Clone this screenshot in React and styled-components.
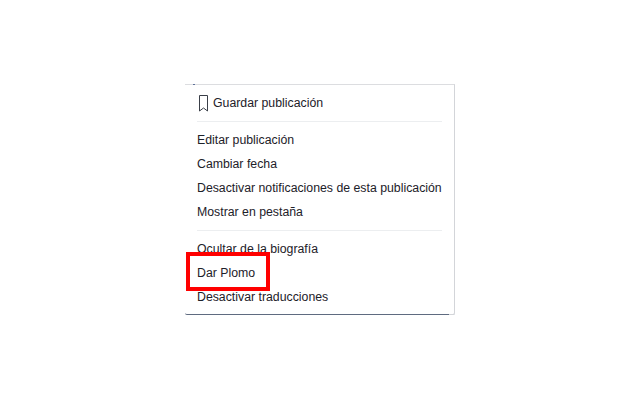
import React from 'react';
import styled, { createGlobalStyle } from 'styled-components';

const GlobalStyle = createGlobalStyle`
    html, body {
        margin: 0;
        padding: 0;
        background: #fff;
    }
    body {
        font-family: "Liberation Sans", Arial, sans-serif;
    }
`;

const Page = styled.div`
    width: 640px;
    height: 400px;
    padding: 84px 0 0 185px;
    box-sizing: border-box;
`;

const Menu = styled.div`
    position: relative;
    width: 270px;
    height: 231px;
    box-sizing: border-box;
    background: #fff;
    border-top: 1px solid #dcdde0;
    border-right: 1px solid #d3d5d9;
    border-bottom: 1px solid #5f6b80;
    border-radius: 0 0 2px 2px;
    padding: 6px 12px 0;

    /* little tick on the top edge */
    &::before {
        content: '';
        position: absolute;
        left: 8px;
        top: -1px;
        width: 2px;
        height: 1px;
        background: #5f7199;
    }

    /* bottom line fades out at the right corner */
    &::after {
        content: '';
        position: absolute;
        right: 0;
        bottom: -1px;
        width: 5px;
        height: 1px;
        background: #d3d5d9;
    }
`;

const SaveRow = styled.div`
    display: flex;
    align-items: center;
    gap: 4px;
    height: 24px;
    color: #1d2129;
    font-size: 12.3px;
    white-space: nowrap;
`;

const BookmarkIcon = styled.svg`
    width: 11px;
    height: 17px;
    margin-left: 1px;
    flex: none;
`;

const Divider = styled.div`
    height: 1px;
    background: #eceef0;
    margin: 6px 0;
`;

const Item = styled.div`
    height: 24px;
    line-height: 24px;
    color: #1d2129;
    font-size: 12.3px;
    white-space: nowrap;
`;

const Highlight = styled.div`
    position: absolute;
    left: 1px;
    top: 167px;
    width: 84px;
    height: 39px;
    box-sizing: border-box;
    border: 4px solid #ff0000;
`;

function App() {
    return (
        <Page>
            <GlobalStyle />
            <Menu>
                <SaveRow>
                    <BookmarkIcon viewBox="0 0 11 17">
                        <path
                            d="M1.5.5h8v15.5L5.5 13l-4 3z"
                            fill="none"
                            stroke="#3a3f48"
                            strokeWidth="1"
                        />
                    </BookmarkIcon>
                    Guardar publicación
                </SaveRow>
                <Divider />
                <Item>Editar publicación</Item>
                <Item>Cambiar fecha</Item>
                <Item>Desactivar notificaciones de esta publicación</Item>
                <Item>Mostrar en pestaña</Item>
                <Divider />
                <Item>Ocultar de la biografía</Item>
                <Item>Dar Plomo</Item>
                <Item>Desactivar traducciones</Item>
                <Highlight />
            </Menu>
        </Page>
    );
}

export default App;
